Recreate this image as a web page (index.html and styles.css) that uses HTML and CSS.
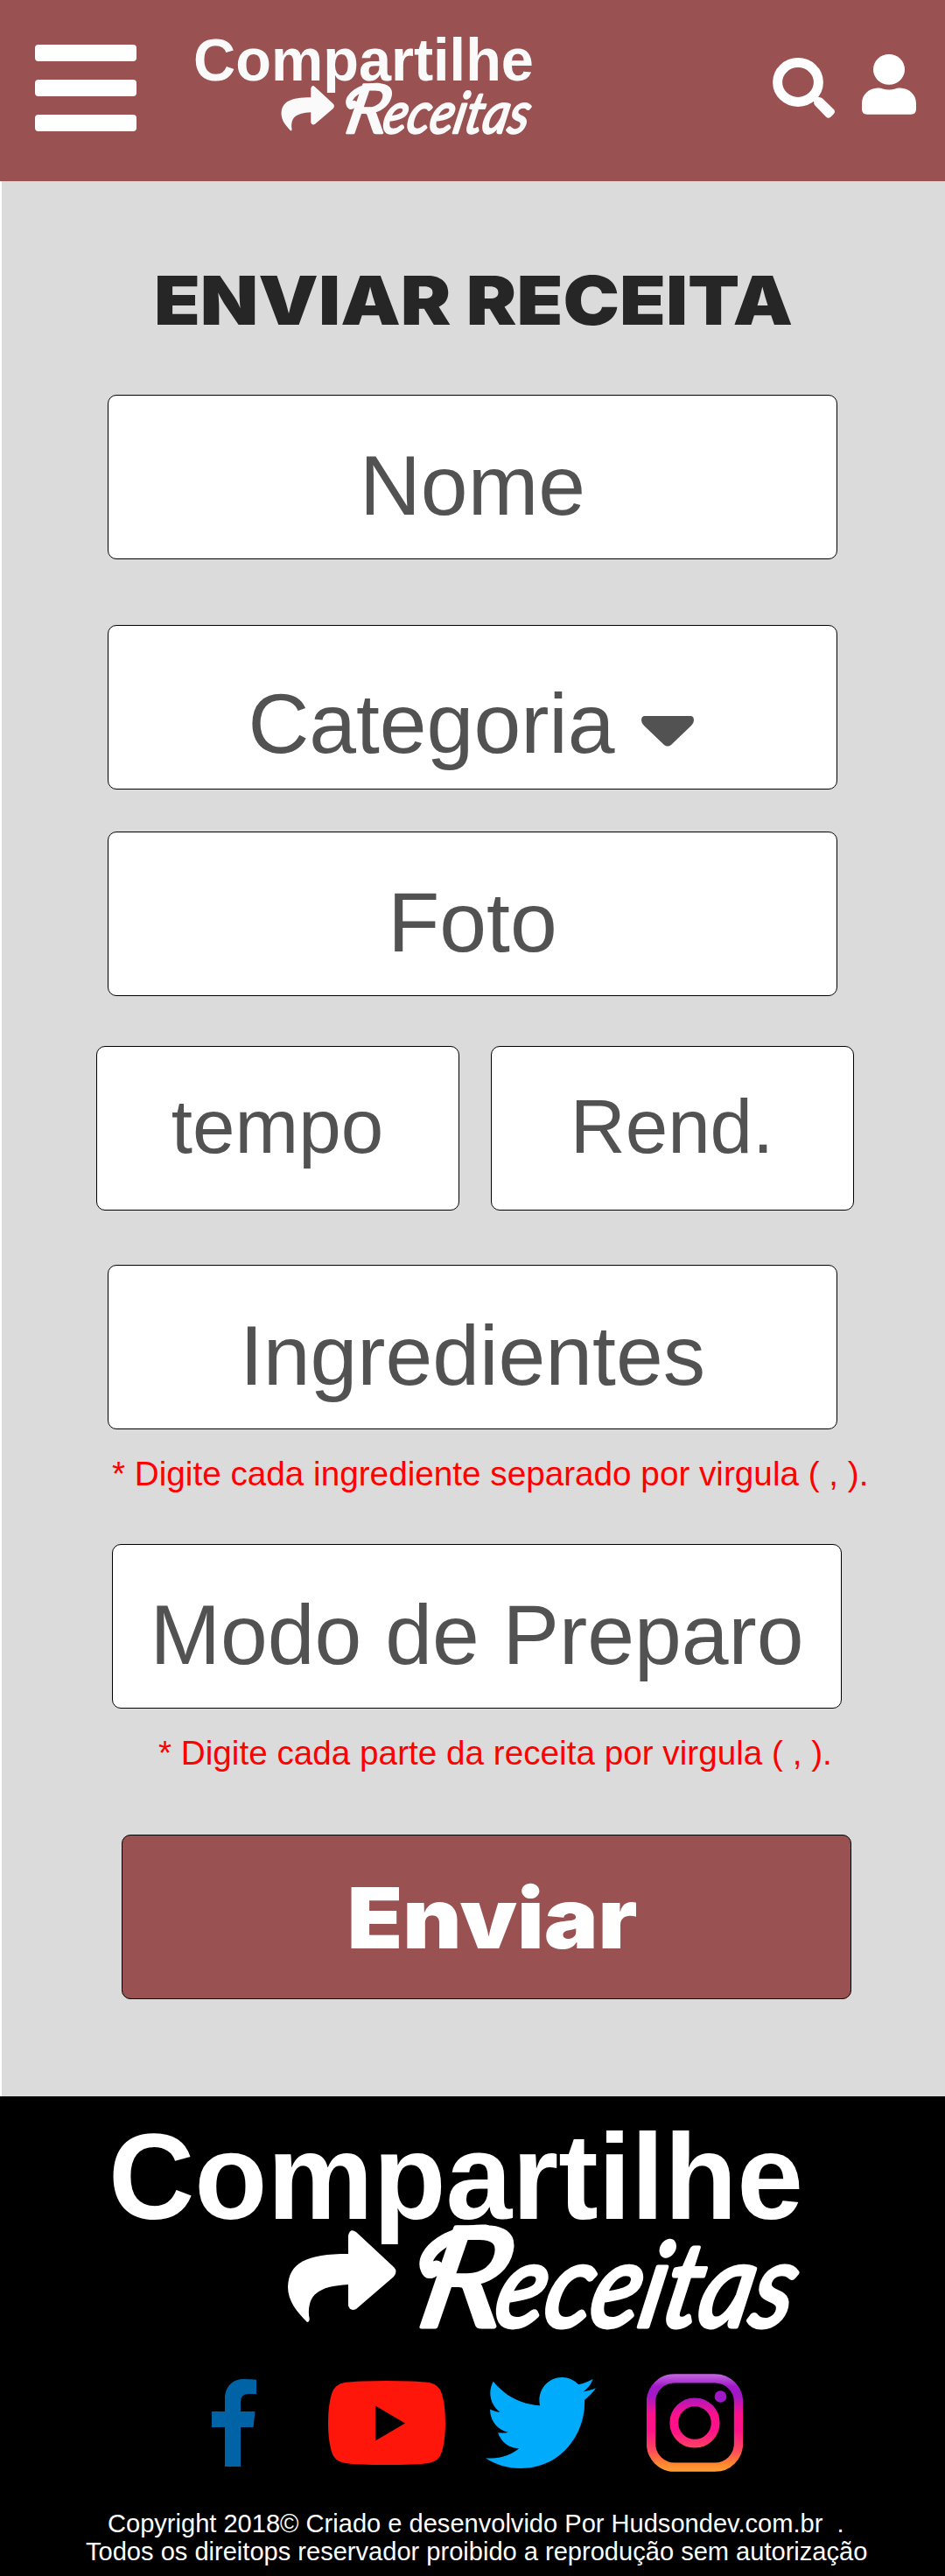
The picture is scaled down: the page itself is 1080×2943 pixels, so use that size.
FILE: index.html
```html
<!DOCTYPE html>
<html lang="pt-BR">
<head>
<meta charset="utf-8">
<title>Compartilhe Receitas</title>
<link rel="stylesheet" href="styles.css">
</head>
<body>
<svg class="defs" width="0" height="0" aria-hidden="true">
  <symbol id="logo" viewBox="-10 -30 808 290" overflow="visible">
    <text class="logo-main" x="-4" y="102" textLength="794" lengthAdjust="spacingAndGlyphs">Compartilhe</text>
    <path d="M270 121Q272 112 279 117L322 157Q327 162 322 168L279 205Q272 208 270 201V177C235 179 224 189 225 212Q227 220 223 220C212 209 201 196 201 180C202 152 222 142 270 142Z"/>
    <g transform="translate(349 225)">
      <text class="logo-script" transform="skewX(-12)"><tspan class="logo-r" x="-3" y="0" textLength="98" lengthAdjust="spacingAndGlyphs">R</tspan><tspan x="84" y="0" textLength="340" lengthAdjust="spacingAndGlyphs">eceitas</tspan></text>
      <path class="logo-swash" d="M22-68Q14-58 11-66C3-84 38-111 78-109"/>
    </g>
  </symbol>
</svg>

<header class="topbar">
  <button class="menu" aria-label="Menu"><span></span><span></span><span></span></button>
  <svg class="logo-top"><use href="#logo"/></svg>
  <div class="actions">
    <svg class="icon-search" viewBox="0 0 71 69"><ellipse cx="29" cy="28" rx="23.4" ry="22.4" fill="none" stroke="#fff" stroke-width="11"/><path d="M47 49.500Q47 45 51.500 45Q55 44.500 57 46.500L70 59Q72 61.500 70 64L66.500 67.500Q63.500 70 61 67.500L48.500 54.500Q47 53 47 49.500Z" fill="#fff"/></svg>
    <svg class="icon-user" viewBox="0 0 62 69"><ellipse cx="31" cy="17.400" rx="18" ry="17.400"/><path d="M18 38.500Q22 38.300 24 39.500Q31 41.500 38 39.500Q40 38.300 44 38.500C54 39 62 46 62 56V63Q62 68.700 56 68.700H6Q0 68.700 0 63V56C0 46 8 39 18 38.500Z"/></svg>
  </div>
</header>

<main class="page">
  <h1>ENVIAR RECEITA</h1>
  <form class="form">
    <div class="field nome">Nome</div>
    <div class="field categoria">Categoria
      <svg class="caret" viewBox="0 0 60 35"><path d="M4 0H56Q60 0 60 5Q60 8 57 11L34 33Q30 36 26 33L3 11Q0 8 0 5Q0 0 4 0Z"/></svg>
    </div>
    <div class="field foto">Foto</div>
    <div class="pair">
      <div class="field small">tempo</div>
      <div class="field small">Rend.</div>
    </div>
    <div class="field ingredientes">Ingredientes</div>
    <p class="note">* Digite cada ingrediente separado por virgula ( , ).</p>
    <div class="field modo">Modo de Preparo</div>
    <p class="note note-modo">* Digite cada parte da receita por virgula ( , ).</p>
    <button class="submit" type="button"><span class="submit-label">Enviar</span></button>
  </form>
</main>

<footer class="footer">
  <svg class="logo-bottom"><use href="#logo"/></svg>
  <nav class="social">
    <svg class="facebook" viewBox="0 0 51 100"><path d="M15 100V55H0V37H15V23C15 8 24 0 37 0Q45 0 51 .7V17H42Q33 17 33 26V37H49.500L47.500 55H33V100Z" fill="#0063a6"/></svg>
    <svg class="youtube" viewBox="0 0 134 96"><path fill-rule="evenodd" d="M67 0Q100 0 115 2Q127 4 130 15Q134 28 134 48T130 81Q127 92 115 94Q100 96 67 96T19 94Q7 92 4 81Q0 68 0 48T4 15Q7 4 19 2Q34 0 67 0ZM54 28.500V68.500L88 48.500Z" fill="#ff160b"/></svg>
    <svg class="twitter" viewBox="0 48 512 416" preserveAspectRatio="none"><path fill="#00abfb" d="M459.370 151.716c.325 4.548.325 9.097.325 13.645 0 138.720-105.583 298.558-298.558 298.558-59.452 0-114.680-17.219-161.137-47.106 8.447.974 16.568 1.299 25.340 1.299 49.055 0 94.213-16.568 130.274-44.832-46.132-.975-84.792-31.188-98.112-72.772 6.498.974 12.995 1.624 19.818 1.624 9.421 0 18.843-1.300 27.614-3.573-48.081-9.747-84.143-51.980-84.143-102.985v-1.299c13.969 7.797 30.214 12.670 47.431 13.319-28.264-18.843-46.781-51.005-46.781-87.391 0-19.492 5.197-37.360 14.294-52.954 51.655 63.675 129.300 105.258 216.365 109.807-1.624-7.797-2.599-15.918-2.599-24.040 0-57.828 46.782-104.934 104.934-104.934 30.213 0 57.502 12.670 76.670 33.137 23.715-4.548 46.456-13.320 66.599-25.340-7.798 24.366-24.366 44.833-46.132 57.827 21.117-2.273 41.584-8.122 60.426-16.243-14.292 20.791-32.161 39.308-52.628 54.253z"/></svg>
    <svg class="instagram" viewBox="0 0 110 112"><defs><linearGradient id="ig" gradientUnits="userSpaceOnUse" x1="0" y1="0" x2="0" y2="112"><stop offset="0" stop-color="#c56be0"/><stop offset=".13" stop-color="#a018c8"/><stop offset=".22" stop-color="#a018c8"/><stop offset=".42" stop-color="#ff118a"/><stop offset=".58" stop-color="#ff118a"/><stop offset=".78" stop-color="#ff4a5a"/><stop offset=".92" stop-color="#ff862e"/><stop offset="1" stop-color="#ffa23a"/></linearGradient></defs><rect x="5" y="5.300" width="100" height="101.400" rx="27" fill="none" stroke="url(#ig)" stroke-width="10.300"/><circle cx="55" cy="56" r="23.700" fill="none" stroke="url(#ig)" stroke-width="9.800"/><circle cx="84.500" cy="26" r="6.800" fill="#a018c8"/></svg>
  </nav>
  <p class="copy line-a">Copyright 2018© Criado e desenvolvido Por Hudsondev.com.br  .</p>
  <p class="copy line-b">Todos os direitops reservador proibido a reprodução sem autorização</p>
</footer>
</body>
</html>
```
FILE: styles.css
```css
* { box-sizing: border-box; }

body {
  margin: 0;
  width: 1080px;
  background: #dbdbdb;
  font-family: "Liberation Sans", Arial, sans-serif;
}

svg { display: block; }
.defs { position: absolute; }

/* Logo */
.logo-main { font: bold 139px "Liberation Sans", Arial, sans-serif; }
.logo-script {
  font: italic 400 134px Lato, "Liberation Sans", sans-serif;
  stroke: currentColor;
  stroke-width: 5;
  stroke-linejoin: round;
}
.logo-r { font-size: 158px; }
.logo-swash { fill: none; stroke: currentColor; stroke-width: 15; stroke-linecap: round; stroke-linejoin: round; }

/* Header */
.topbar {
  display: flex;
  align-items: flex-start;
  height: 207px;
  background: #9a5151;
  color: #fff;
}
.menu {
  display: flex;
  flex-direction: column;
  gap: 21px;
  width: 116px;
  margin: 51px 0 0 40px;
  padding: 0;
  border: 0;
  background: none;
}
.menu span { height: 19px; border-radius: 4px; background: #fff; }
.logo-top { width: 396px; height: 142px; margin: 27px 0 0 62px; fill: #fafafa; color: #fafafa; }
.actions { display: flex; gap: 31px; margin: 62px 0 0 269px; fill: #fff; }
.icon-search { width: 71px; height: 69px; margin-top: 4px; }
.icon-user { width: 62px; height: 69px; }

/* Form */
.page { height: 2188px; border-left: 2px solid #fff; overflow: hidden; }
h1 {
  margin: 89px 0 0;
  color: #262626;
  font: 900 77px/94px Inter, "Liberation Sans", sans-serif;
  text-align: center;
  white-space: nowrap;
  transform: scaleX(1.122);
}
.form { display: flex; flex-direction: column; align-items: flex-start; padding: 61px 0 0 121px; }
.field {
  display: flex;
  align-items: center;
  justify-content: center;
  width: 834px;
  height: 188px;
  padding-top: 17px;
  border: 1px solid #000;
  border-radius: 10px;
  background: #fff;
  color: #525252;
  font-size: 96.7px;
  line-height: 110px;
  white-space: nowrap;
}
.categoria { gap: 30px; margin-top: 75px; padding: 35px 4px 0 0; }
.caret { width: 60px; height: 35px; margin-top: 20px; fill: #525252; }
.foto { margin-top: 48px; }
.pair { display: flex; gap: 36px; margin: 57px 0 0 -13px; }
.small { width: 415px; padding: 0 1px 5px 0; font-size: 87.2px; }
.ingredientes { margin-top: 62px; }
.note {
  margin: 29px 0 0 5px;
  color: #f00;
  font-size: 38.7px;
  line-height: 44px;
  white-space: nowrap;
}
.modo { margin: 58px 0 0 5px; }
.note-modo { margin: 29px 0 0 58px; }
.submit {
  width: 834px;
  height: 188px;
  margin: 71px 0 0 16px;
  padding: 2px 0 0 13px;
  border: 1px solid #000;
  border-radius: 10px;
  background: #9a5151;
  color: #fff;
  font: 900 96px/110px Inter, "Liberation Sans", sans-serif;
}
.submit-label { display: inline-block; transform: scaleX(1.08); }

/* Footer */
.footer { height: 548px; padding-top: 8px; background: #000; color: #fff; overflow: hidden; }
.logo-bottom { width: 808px; height: 290px; margin-left: 118px; fill: #fff; }
.social { display: flex; align-items: center; height: 112px; margin: 19px 0 0 242px; }
.facebook { width: 51px; height: 100px; }
.youtube { width: 134px; height: 96px; margin-left: 82px; }
.twitter { width: 126px; height: 104px; margin-left: 46px; }
.instagram { width: 110px; height: 112px; margin-left: 58px; }
.copy { margin: 0; font-size: 29.07px; line-height: 32px; white-space: pre; }
.line-a { margin: 43px 0 0 123px; }
.line-b { margin-left: 98px; }
```
